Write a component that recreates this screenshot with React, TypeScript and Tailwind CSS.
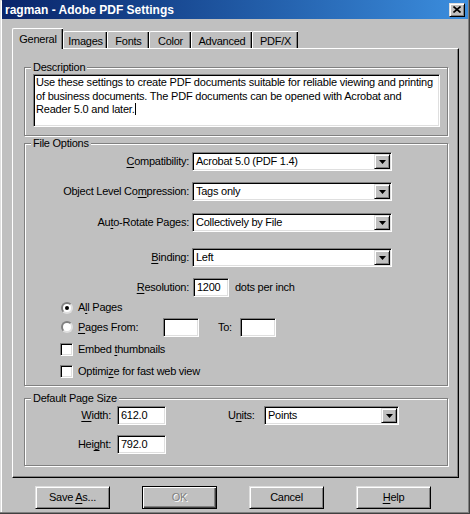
import React from 'react';

const sunken =
  'border border-t-[#808080] border-l-[#808080] border-r-white border-b-white shadow-[inset_1px_1px_0_#000,inset_-1px_-1px_0_#dfdfdf]';
const raised =
  'border border-t-[#dfdfdf] border-l-[#dfdfdf] border-r-black border-b-black shadow-[inset_1px_1px_0_#fff,inset_-1px_-1px_0_#808080]';
const etched = 'border border-[#808080] shadow-[inset_1px_1px_0_#fff,1px_1px_0_#fff]';

function U({ children }: { children: React.ReactNode }) {
  return <span className="underline underline-offset-[2px]">{children}</span>;
}

function Combo({ value, className }: { value: string; className: string }) {
  return (
    <div className={`${sunken} bg-white flex h-[19px] ${className}`}>
      <span className="flex-1 pl-[3px] leading-[17px] truncate">{value}</span>
      <div className={`${raised} bg-[#c0c0c0] w-[16px] m-px flex items-center justify-center`}>
        <svg width="7" height="4" viewBox="0 0 7 4">
          <path d="M0 0H7L3.5 4Z" fill="#000" />
        </svg>
      </div>
    </div>
  );
}

function Field({ value = '', className }: { value?: string; className: string }) {
  return (
    <div className={`${sunken} bg-white h-[19px] pl-[3px] leading-[17px] ${className}`}>{value}</div>
  );
}

function Group({ title, className, children }: { title: string; className: string; children: React.ReactNode }) {
  return (
    <div className={`relative ${etched} ${className}`}>
      <span className="absolute left-[6px] -top-[7px] px-[2px] bg-[#c0c0c0] leading-[13px]">{title}</span>
      {children}
    </div>
  );
}

function Radio({ checked }: { checked?: boolean }) {
  return (
    <div className="w-[12px] h-[12px] rounded-full bg-white border-2 border-t-[#808080] border-l-[#808080] border-r-[#dfdfdf] border-b-[#dfdfdf] flex items-center justify-center">
      {checked && <div className="w-[4px] h-[4px] rounded-full bg-black" />}
    </div>
  );
}

function Check() {
  return <div className={`${sunken} bg-white w-[13px] h-[13px]`} />;
}

function Button({ children }: { children: React.ReactNode }) {
  return (
    <div className={`${raised} bg-[#c0c0c0] w-[75px] h-[23px] flex items-center justify-center`}>
      <span>{children}</span>
    </div>
  );
}

const tabs = [
  { name: 'Images', w: 'w-[44px]' },
  { name: 'Fonts', w: 'w-[42px]' },
  { name: 'Color', w: 'w-[42px]' },
  { name: 'Advanced', w: 'w-[61px]' },
  { name: 'PDF/X', w: 'w-[46px]' },
];

export default function App() {
  return (
    <div className="w-[470px] h-[514px] bg-[#c0c0c0] text-black text-[11px] tracking-[-0.25px] font-[Liberation_Sans,Arial,sans-serif] shadow-[inset_-1px_-1px_0_#404040,inset_-2px_-2px_0_#808080,inset_1px_1px_0_#dfdfdf,inset_2px_2px_0_#fff] flex flex-col overflow-hidden">
      {/* Title bar */}
      <div className="mx-[2px] h-[19px] bg-gradient-to-r from-[#0a246a] to-[#3c8ede] flex items-center pl-[3px] pr-[3px]">
        <span className="flex-1 text-white font-bold text-[12px] tracking-normal">ragman - Adobe PDF Settings</span>
        <div className={`${raised} bg-[#c0c0c0] w-[16px] h-[14px] flex items-center justify-center`}>
          <svg width="8" height="7" viewBox="0 0 8 7">
            <path d="M0.5 0.5L7.5 6.5M7.5 0.5L0.5 6.5" stroke="#000" strokeWidth="1.6" />
          </svg>
        </div>
      </div>

      {/* Tabs */}
      <div className="mt-[9px] h-[20px] flex items-end pl-[12px]">
        <div className="relative z-10 w-[51px] h-[21px] -mb-px bg-[#c0c0c0] border-t border-l border-white rounded-tl-[2px] shadow-[inset_-1px_0_0_#000,inset_-2px_0_0_#808080] flex items-start justify-center pt-[2px]">
          General
        </div>
        {tabs.map((t) => (
          <div
            key={t.name}
            className={`${t.w} h-[17px] border-t border-l border-white rounded-tl-[2px] shadow-[inset_-1px_0_0_#000,inset_-2px_0_0_#808080] flex items-start justify-center pt-[1px]`}
          >
            {t.name}
          </div>
        ))}
      </div>

      {/* Tab pane */}
      <div className="ml-[12px] w-[447px] h-[430px] border border-t-white border-l-white border-r-black border-b-black shadow-[inset_-1px_-1px_0_#808080] pl-[11px] pt-[18px]">
        <Group title="Description" className="w-[424px] h-[69px] pl-[8px] pt-[6px]">
          <div className={`${sunken} bg-white w-[407px] h-[53px] px-[2px] pt-[1px] leading-[13.5px] tracking-[-0.2px] whitespace-nowrap overflow-hidden`}>
            Use these settings to create PDF documents suitable for reliable viewing and printing
            <br />
            of business documents. The PDF documents can be opened with Acrobat and
            <br />
            Reader 5.0 and later.
            <span className="inline-block w-px h-[12px] bg-black align-[-2px]" />
          </div>
        </Group>

        <Group title="File Options" className="mt-[7px] w-[424px] h-[243px] pt-[8px] flex flex-col">
          <div className="flex items-center">
            <div className="w-[164px] text-right">
              <U>C</U>ompatibility:
            </div>
            <Combo value="Acrobat 5.0 (PDF 1.4)" className="ml-[3px] w-[200px]" />
          </div>
          <div className="mt-[11px] flex items-center">
            <div className="w-[164px] text-right">
              Object Level Co<U>m</U>pression:
            </div>
            <Combo value="Tags only" className="ml-[3px] w-[200px]" />
          </div>
          <div className="mt-[12px] flex items-center">
            <div className="w-[164px] text-right">
              Au<U>t</U>o-Rotate Pages:
            </div>
            <Combo value="Collectively by File" className="ml-[3px] w-[200px]" />
          </div>
          <div className="mt-[16px] flex items-center">
            <div className="w-[164px] text-right">
              <U>B</U>inding:
            </div>
            <Combo value="Left" className="ml-[3px] w-[200px]" />
          </div>
          <div className="mt-[11px] flex items-center">
            <div className="w-[164px] text-right">
              <U>R</U>esolution:
            </div>
            <Field value="1200" className="ml-[4px] w-[36px]" />
            <span className="ml-[6px]">dots per inch</span>
          </div>
          <div className="mt-[4px] h-[13px] flex items-center pl-[36px]">
            <Radio checked />
            <span className="ml-[5px]">
              A<U>l</U>l Pages
            </span>
          </div>
          <div className="mt-[3px] h-[20px] flex items-center pl-[36px]">
            <Radio />
            <span className="ml-[5px] w-[85px]">
              <U>P</U>ages From:
            </span>
            <Field className="w-[36px]" />
            <span className="ml-[19px] w-[22px]">To:</span>
            <Field className="w-[36px]" />
          </div>
          <div className="mt-[6px] h-[13px] flex items-center pl-[35px]">
            <Check />
            <span className="ml-[5px]">
              Embed <U>t</U>humbnails
            </span>
          </div>
          <div className="mt-[9px] h-[13px] flex items-center pl-[35px]">
            <Check />
            <span className="ml-[5px]">
              Optimi<U>z</U>e for fast web view
            </span>
          </div>
        </Group>

        <Group title="Default Page Size" className="mt-[12px] w-[424px] h-[68px] pt-[7px] flex flex-col">
          <div className="flex items-center">
            <div className="w-[86px] text-right">
              <U>W</U>idth:
            </div>
            <Field value="612.0" className="ml-[6px] w-[49px]" />
            <div className="ml-[62px] w-[36px]">
              U<U>n</U>its:
            </div>
            <Combo value="Points" className="w-[135px]" />
          </div>
          <div className="mt-[10px] flex items-center">
            <div className="w-[86px] text-right">
              Hei<U>g</U>ht:
            </div>
            <Field value="792.0" className="ml-[6px] w-[49px]" />
          </div>
        </Group>
      </div>

      {/* Buttons */}
      <div className="mt-[8px] flex pl-[35px] gap-[32px]">
        <Button>
          Save <U>A</U>s...
        </Button>
        <div className="border border-black bg-[#c0c0c0] w-[75px] h-[23px] flex items-center justify-center shadow-[inset_1px_1px_0_#fff,inset_-1px_-1px_0_#404040,inset_-2px_-2px_0_#808080] text-[#808080] [text-shadow:1px_1px_0_#fff]">
          OK
        </div>
        <Button>Cancel</Button>
        <Button>
          <U>H</U>elp
        </Button>
      </div>
    </div>
  );
}
